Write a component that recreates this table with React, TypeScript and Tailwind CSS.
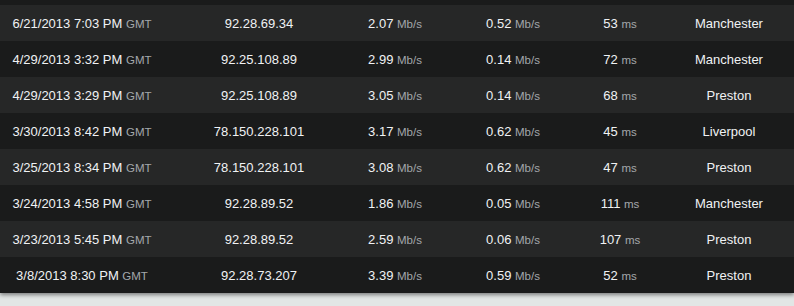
import React from "react";

type Row = { date: string; ip: string; down: string; up: string; ping: string; city: string };

const rows: Row[] = [
  { date: "6/21/2013 7:03 PM", ip: "92.28.69.34", down: "2.07", up: "0.52", ping: "53", city: "Manchester" },
  { date: "4/29/2013 3:32 PM", ip: "92.25.108.89", down: "2.99", up: "0.14", ping: "72", city: "Manchester" },
  { date: "4/29/2013 3:29 PM", ip: "92.25.108.89", down: "3.05", up: "0.14", ping: "68", city: "Preston" },
  { date: "3/30/2013 8:42 PM", ip: "78.150.228.101", down: "3.17", up: "0.62", ping: "45", city: "Liverpool" },
  { date: "3/25/2013 8:34 PM", ip: "78.150.228.101", down: "3.08", up: "0.62", ping: "47", city: "Preston" },
  { date: "3/24/2013 4:58 PM", ip: "92.28.89.52", down: "1.86", up: "0.05", ping: "111", city: "Manchester" },
  { date: "3/23/2013 5:45 PM", ip: "92.28.89.52", down: "2.59", up: "0.06", ping: "107", city: "Preston" },
  { date: "3/8/2013 8:30 PM", ip: "92.28.73.207", down: "3.39", up: "0.59", ping: "52", city: "Preston" },
];

function Unit({ children }: { children: React.ReactNode }) {
  return <span className="text-[11.5px] text-[#a4a8ab]">{children}</span>;
}

export default function App() {
  return (
    <div
      className="h-[306px] w-[794px] overflow-hidden bg-[#e2e6e5]"
      style={{ fontFamily: '"Liberation Sans", Arial, sans-serif' }}
    >
      <div className="bg-[#1a1b1b] pt-[5px] shadow-[0_2px_4px_rgba(0,0,0,0.45)]">
        {rows.map((r, i) => (
          <div
            key={i}
            className={`grid h-[36px] grid-cols-[164px_190px_82px_154px_60px_1fr] items-center pt-px text-[13px] text-[#f0f2f4] ${
              i % 2 === 0 ? "bg-[#262727]" : "bg-[#1a1b1b]"
            }`}
          >
            <div className="whitespace-nowrap text-center">
              {r.date} <Unit>GMT</Unit>
            </div>
            <div className="whitespace-nowrap text-center">{r.ip}</div>
            <div className="whitespace-nowrap text-center">
              {r.down} <Unit>Mb/s</Unit>
            </div>
            <div className="whitespace-nowrap text-center">
              {r.up} <Unit>Mb/s</Unit>
            </div>
            <div className="whitespace-nowrap text-center">
              {r.ping} <Unit>ms</Unit>
            </div>
            <div className="whitespace-nowrap pl-[14px] text-center">{r.city}</div>
          </div>
        ))}
      </div>
    </div>
  );
}
